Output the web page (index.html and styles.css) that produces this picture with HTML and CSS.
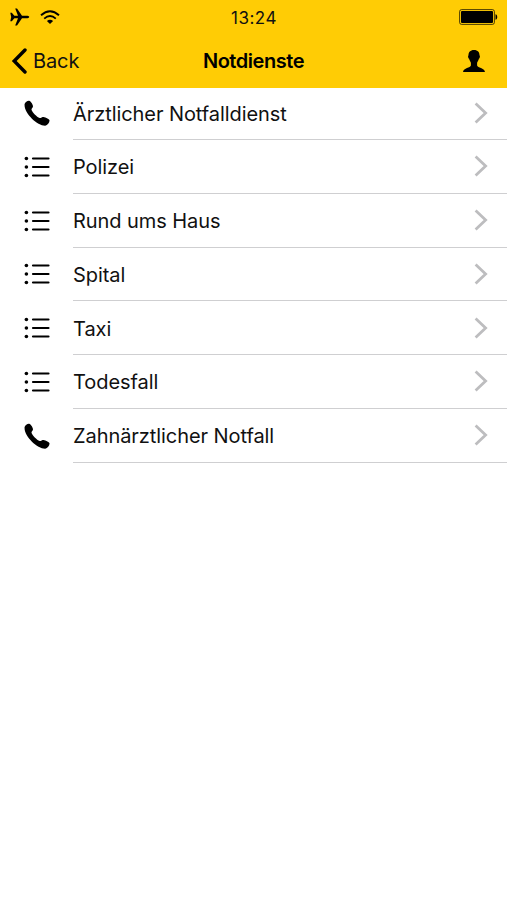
FILE: index.html
```html
<!DOCTYPE html>
<html lang="de">
  <head>
    <meta charset="UTF-8" />
    <meta name="viewport" content="width=device-width, initial-scale=1.0" />
    <title>Notdienste</title>
    <link rel="stylesheet" href="styles.css">
  </head>
  <body>
    <svg class="sprite" aria-hidden="true">
      <symbol id="icon-phone" viewBox="0 0 26 26">
        <path d="M.6 4C1.2 2 3.6 .5 5.2 .8C6.8 1.2 8.9 4.6 9 6.3C9 7.8 7.4 8.6 7.5 9.8C8.3 12.5 12.7 16.9 15.7 18.1C17 18.2 17.5 17 18.8 16.9C20.4 16.9 24.8 18.6 25.4 20C26 21.7 23.8 25 21.2 25.7C13.5 25.9 -.4 13 .6 4Z" />
      </symbol>
      <symbol id="icon-list" viewBox="0 0 26 22">
        <circle cx="2.4" cy="2.5" r="1.8" />
        <circle cx="2.4" cy="11" r="1.8" />
        <circle cx="2.4" cy="19.5" r="1.8" />
        <path d="M9 2.5H24.5M9 11H24.5M9 19.5H24.5" stroke="#000" stroke-width="2.2" stroke-linecap="round" />
      </symbol>
      <symbol id="icon-chevron" viewBox="0 0 14 22">
        <path d="M1.6 1.6L11.6 11L1.6 20.4" fill="none" stroke="#bdbdbf" stroke-width="2.8" />
      </symbol>
    </svg>

    <header class="header">
      <div class="status-bar">
        <div class="status-left">
          <svg class="plane" viewBox="0 0 20 18">
            <path d="M.3 4.8H1.8L4.4 7.8H8L5.2 .5H7L12 7.8H17.5C19.8 8 19.8 10 17.5 10.2H12L7 17.5H5.2L8 10.2H4.4L1.8 13.2H.3L1.2 9Z" />
          </svg>
          <svg class="wifi" viewBox="0 0 20 15">
            <path d="M1 5.3Q10 -2.6 19 5.3M4.2 8.6Q10 3.6 15.8 8.6" fill="none" stroke="#000" stroke-width="1.9" />
            <path d="M6.9 11Q10 8.6 13.1 11L10 14Z" />
          </svg>
        </div>
        <div class="time">13:24</div>
        <div class="status-right">
          <svg class="battery" viewBox="0 0 39 16">
            <rect x=".6" y=".6" width="34.8" height="14.8" rx="2" fill="none" stroke="#000" stroke-opacity=".7" />
            <rect x="2" y="2" width="32" height="12" rx="1" />
            <path d="M36.5 5.2C38.8 5.7 38.8 10.3 36.5 10.8Z" />
          </svg>
        </div>
      </div>
      <nav class="nav-bar">
        <a class="back" href="#">
          <svg class="back-icon" viewBox="0 0 16 26">
            <path d="M14 2L3.2 13L14 24" fill="none" stroke="#000" stroke-width="3.4" stroke-linecap="round" />
          </svg>
          <span>Back</span>
        </a>
        <h1 class="title">Notdienste</h1>
        <a class="profile" href="#" aria-label="Profil">
          <svg class="profile-icon" viewBox="0 0 22 22">
            <path d="M11 0C14.8 0 16.6 2.3 16.5 5.2C17.4 5.6 16.8 8.4 15.9 8.7C15.5 10.6 14.4 11.7 14.1 12.7V15.6C14.6 18 21.4 18 22 22H0C.6 18 7.4 18 7.9 15.6V12.7C7.6 11.7 6.5 10.6 6.1 8.7C5.2 8.4 4.6 5.6 5.5 5.2C5.4 2.3 7.2 0 11 0Z" />
          </svg>
        </a>
      </nav>
    </header>

    <ul class="list">
      <li class="item">
        <svg class="icon-phone"><use href="#icon-phone" /></svg>
        <div class="item-body">
          <span class="label">Ärztlicher Notfalldienst</span>
          <svg class="chevron"><use href="#icon-chevron" /></svg>
        </div>
      </li>
      <li class="item">
        <svg class="icon-list"><use href="#icon-list" /></svg>
        <div class="item-body">
          <span class="label">Polizei</span>
          <svg class="chevron"><use href="#icon-chevron" /></svg>
        </div>
      </li>
      <li class="item">
        <svg class="icon-list"><use href="#icon-list" /></svg>
        <div class="item-body">
          <span class="label">Rund ums Haus</span>
          <svg class="chevron"><use href="#icon-chevron" /></svg>
        </div>
      </li>
      <li class="item">
        <svg class="icon-list"><use href="#icon-list" /></svg>
        <div class="item-body">
          <span class="label">Spital</span>
          <svg class="chevron"><use href="#icon-chevron" /></svg>
        </div>
      </li>
      <li class="item">
        <svg class="icon-list"><use href="#icon-list" /></svg>
        <div class="item-body">
          <span class="label">Taxi</span>
          <svg class="chevron"><use href="#icon-chevron" /></svg>
        </div>
      </li>
      <li class="item">
        <svg class="icon-list"><use href="#icon-list" /></svg>
        <div class="item-body">
          <span class="label">Todesfall</span>
          <svg class="chevron"><use href="#icon-chevron" /></svg>
        </div>
      </li>
      <li class="item">
        <svg class="icon-phone"><use href="#icon-phone" /></svg>
        <div class="item-body">
          <span class="label">Zahnärztlicher Notfall</span>
          <svg class="chevron"><use href="#icon-chevron" /></svg>
        </div>
      </li>
    </ul>
  </body>
</html>
```
FILE: styles.css
```css
* {
  box-sizing: border-box;
}

body {
  margin: 0;
  min-height: 100vh;
  background-color: #fff;
  color: #111;
  font-family: Inter, "Liberation Sans", sans-serif;
  font-size: 20px;
}

.sprite {
  display: none;
}

svg {
  display: block;
  flex: none;
}

/* header */
.header {
  height: 87.5px;
  background-color: #ffcc05;
}

.status-bar,
.nav-bar {
  display: grid;
  grid-template-columns: 1fr auto 1fr;
  align-items: center;
}

.status-bar {
  height: 34px;
  padding: 0 9px 0 10px;
}

.status-left {
  display: flex;
  align-items: center;
  gap: 10px;
}

.plane {
  width: 20px;
  height: 18px;
}

.wifi {
  width: 20px;
  height: 15px;
}

.time {
  padding-top: 1px;
  font-size: 17px;
  letter-spacing: 0.5px;
}

.status-right,
.profile {
  justify-self: end;
}

.battery {
  width: 39px;
  height: 16px;
}

.nav-bar {
  height: 53.5px;
  padding: 0 11px;
}

.back {
  display: flex;
  align-items: center;
  gap: 6px;
  color: #111;
  text-decoration: none;
  letter-spacing: -0.1px;
}

.back-icon {
  width: 16px;
  height: 26px;
}

.title {
  margin: 0;
  color: #000;
  font-size: 20px;
  font-weight: 600;
  letter-spacing: -0.45px;
}

.profile {
  margin-right: 11px;
}

.profile-icon {
  width: 22px;
  height: 22px;
}

/* list */
.list {
  margin: -1.25px 0 0;
  padding: 0;
  list-style: none;
}

.item {
  display: flex;
  align-items: center;
  gap: 23px;
  height: 53.75px;
  padding-left: 24px;
}

.icon-phone {
  width: 26px;
  height: 26px;
}

.icon-list {
  width: 26px;
  height: 22px;
}

.item-body {
  display: flex;
  flex: 1;
  align-items: center;
  justify-content: space-between;
  height: 100%;
  padding-right: 19px;
  border-bottom: 1.5px solid #cfcfd1;
}

.label {
  padding-top: 2px;
  letter-spacing: -0.07px;
}

.chevron {
  width: 14px;
  height: 22px;
}
```
